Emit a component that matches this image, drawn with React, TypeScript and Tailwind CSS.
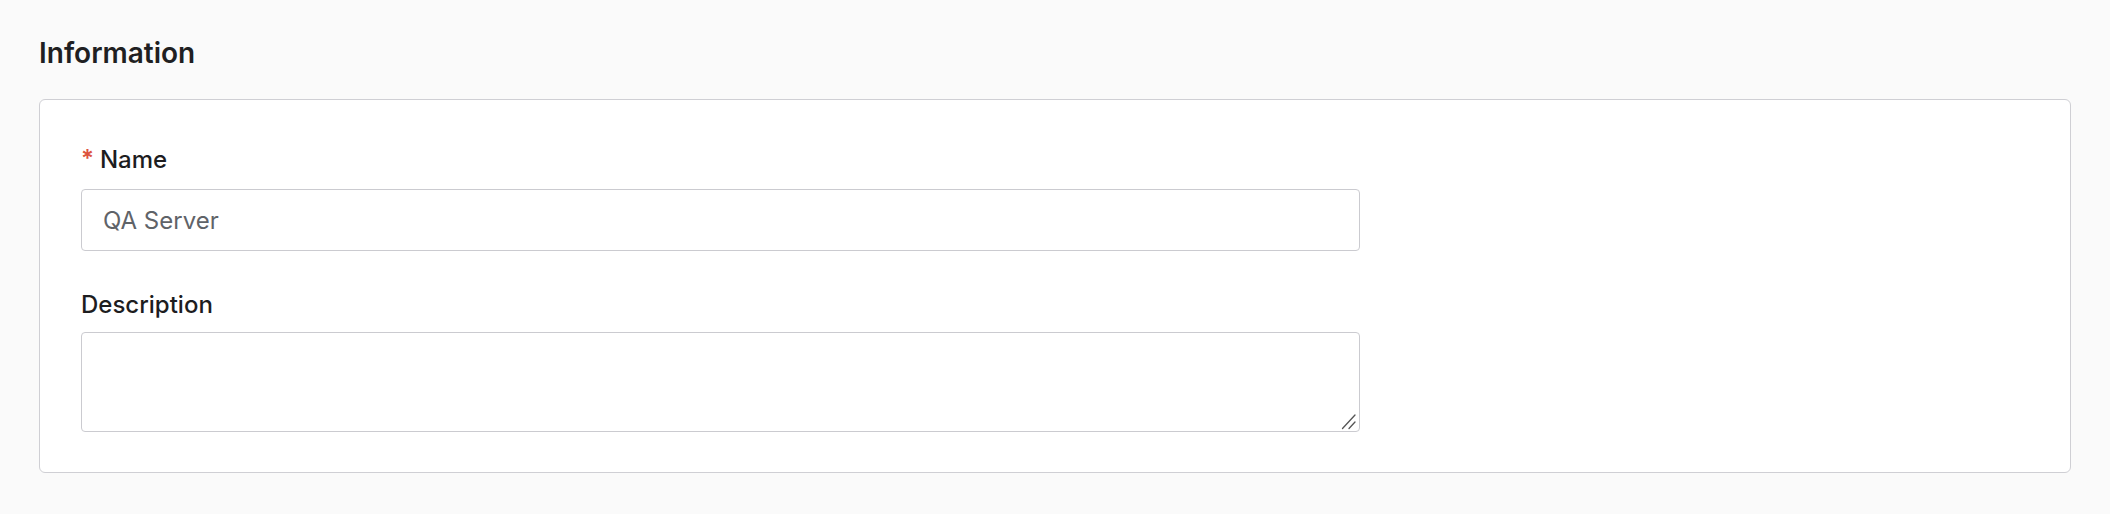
export default function App() {
  return (
    <div
      className="min-h-[514px] w-full bg-[#fafafa] px-[39px] pt-[36px] pb-[40px]"
      style={{ fontFamily: 'Inter, "Noto Sans", sans-serif' }}
    >
      <h2 className="text-[28px] leading-[34px] font-semibold text-[#1f1f22]">Information</h2>
      <div className="mt-[29px] rounded-[6px] border border-[#cfcfd4] bg-white pl-[41px] pt-[44px] pb-[40px]">
        <div className="flex flex-col">
          <label className="flex items-center text-[24px] leading-[32px] font-medium text-[#1d1d1f]">
            <span className="mr-[6px] mt-[-2px] text-[24px] font-semibold text-[#dc5340]">*</span>
            Name
          </label>
          <input
            className="mt-[13px] h-[62px] w-[1279px] rounded-[4px] border border-[#cbcbd0] bg-white pl-[21px] text-[24px] text-[#5f6368] outline-none"
            defaultValue="QA Server"
          />
        </div>
        <div className="mt-[38px] flex flex-col">
          <label className="text-[24px] leading-[32px] font-medium text-[#1d1d1f]">Description</label>
          <div className="relative mt-[11px] h-[100px] w-[1279px]">
            <textarea className="h-full w-full resize-none rounded-[4px] border border-[#cbcbd0] bg-white px-[21px] py-[10px] text-[24px] text-[#5f6368] outline-none" />
            <svg
              className="pointer-events-none absolute right-[3px] bottom-[2px]"
              width="16"
              height="16"
              viewBox="0 0 16 16"
            >
              <line x1="14" y1="1" x2="1.5" y2="14.5" stroke="#555" strokeWidth="1.3" strokeLinecap="round" />
              <line x1="14" y1="8" x2="8" y2="14.5" stroke="#555" strokeWidth="1.3" strokeLinecap="round" />
            </svg>
          </div>
        </div>
      </div>
    </div>
  );
}
